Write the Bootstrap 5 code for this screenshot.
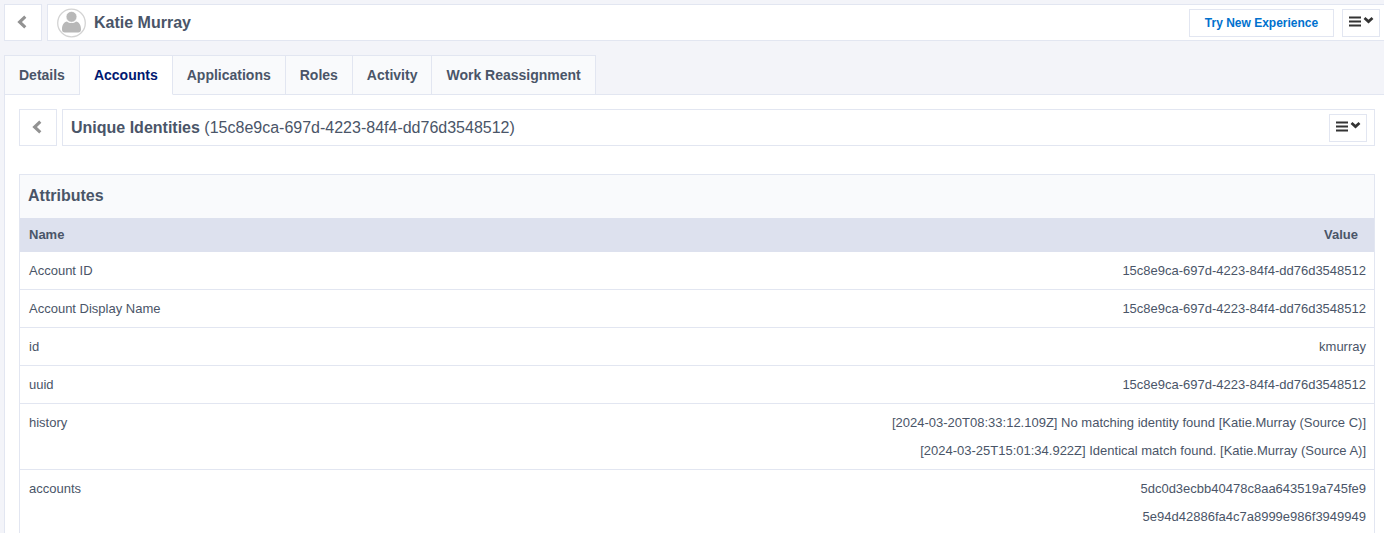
<!DOCTYPE html>
<html lang="en">
<head>
<meta charset="utf-8">
<meta name="viewport" content="width=device-width, initial-scale=1">
<title>Katie Murray - Accounts</title>
<link href="https://cdn.jsdelivr.net/npm/bootstrap@5.3.0/dist/css/bootstrap.min.css" rel="stylesheet">
<style>
  :root { --line: #e2e6f1; --ink: #4a5568; }
  body { font-family: "Liberation Sans", Arial, sans-serif; font-size: 13px; line-height: 20px; color: var(--ink); background: #f3f4f9; overflow: hidden; }
  .page { padding: 4px 0 0 4px; }
  .bar-box { background: #fff; border: 1px solid var(--line); height: 37px; margin-left: 5px; }
  .page-head .bar-box { border-right: 0; padding: 0 4px 0 9px; }
  .panel .bar-box { padding: 0 7px 0 8px; }
  .back-btn, .tool-btn { background: #fff; border: 1px solid var(--line); border-radius: 0; padding: 0; }
  .back-btn { width: 38px; height: 37px; display: flex; align-items: center; justify-content: center; flex: none; }
  .back-btn svg { margin: 0 2px 2px 0; }
  .tool-btn { height: 28px; flex: none; }
  .menu-btn { width: 38px; display: flex; justify-content: center; padding-top: 5px; }
  .try-btn { width: 145px; color: #0071ce; font-size: 12px; font-weight: bold; line-height: 26px; }
  .bar-title { font-size: 16px; line-height: 24px; margin: 0; font-weight: normal; }
  .nav-tabs { --bs-nav-tabs-border-color: var(--line); margin-top: 14px; }
  .nav-tabs .nav-link { border: 1px solid var(--line); border-left-width: 0; border-radius: 0; background: #f9fafc; color: var(--ink); font-size: 14px; font-weight: bold; line-height: 20px; padding: 9px 14px; height: 40px; }
  .nav-tabs .nav-item:first-child .nav-link { border-left-width: 1px; }
  .nav-tabs .nav-link.active { background: #fff; color: #001871; border-color: var(--line) var(--line) #fff; }
  .panel { background: #fff; border-left: 1px solid var(--line); padding: 14px 9px 0 14px; }
  .attributes { border: 1px solid var(--line); margin-top: 28px; }
  .attributes h2 { font-size: 16px; line-height: 24px; font-weight: bold; background: #f9fafc; margin: 0; padding: 9px 8px 10px; }
  .attr-table { --bs-table-color: var(--ink); color: var(--ink); margin: 0; }
  .attr-table > thead > tr > th { background: #dde1ee; border: 0; padding: 7px 16px 7px 9px; }
  .attr-table > tbody > tr > * { border-bottom: 1px solid var(--line); padding: 5px 8px 4px 9px; line-height: 28px; font-weight: normal; }
</style>
</head>
<body>
<svg class="d-none" aria-hidden="true">
  <symbol id="chevron" viewBox="0 0 10 14"><path d="M8.300 1.600 2.600 7l5.700 5.400" fill="none" stroke="#929292" stroke-width="3.100"/></symbol>
  <symbol id="menu" viewBox="0 0 26 13"><path d="M1 2.500h12M1 6.500h12M1 10.500h12" stroke="#333" stroke-width="2"/><path d="m16.500 3 4 3.600 4-3.600" fill="none" stroke="#333" stroke-width="2.700"/></symbol>
</svg>
<div class="page">
  <header class="page-head d-flex">
    <button type="button" class="back-btn" aria-label="Back"><svg width="10" height="14"><use href="#chevron"/></svg></button>
    <div class="bar-box d-flex align-items-center flex-grow-1">
      <svg class="me-2" width="29" height="30" viewBox="0 0 29 30" aria-hidden="true">
        <circle cx="14.5" cy="15" r="13.8" fill="#fff" stroke="#d3d3d3" stroke-width="1.3"/>
        <path d="M5 21.500c0-4.500 2-7.300 5-7.900 2.400 2 6.600 2 9 0 3 .6 5 3.400 5 7.900 0 2-1 3-2.800 3H7.800c-1.800 0-2.800-1-2.800-3z" fill="#b8b8b8"/>
        <circle cx="14.5" cy="8.800" r="5.400" fill="#b8b8b8" stroke="#fff" stroke-width=".6"/>
      </svg>
      <h1 class="bar-title fw-bold me-auto">Katie Murray</h1>
      <button type="button" class="tool-btn try-btn me-2">Try New Experience</button>
      <button type="button" class="tool-btn menu-btn" aria-label="Menu"><svg width="26" height="13"><use href="#menu"/></svg></button>
    </div>
  </header>
  <ul class="nav nav-tabs">
    <li class="nav-item"><a class="nav-link" href="#">Details</a></li>
    <li class="nav-item"><a class="nav-link active" aria-current="page" href="#">Accounts</a></li>
    <li class="nav-item"><a class="nav-link" href="#">Applications</a></li>
    <li class="nav-item"><a class="nav-link" href="#">Roles</a></li>
    <li class="nav-item"><a class="nav-link" href="#">Activity</a></li>
    <li class="nav-item"><a class="nav-link" href="#">Work Reassignment</a></li>
  </ul>
  <main class="panel">
    <div class="d-flex">
      <button type="button" class="back-btn" aria-label="Back to accounts"><svg width="10" height="14"><use href="#chevron"/></svg></button>
      <div class="bar-box d-flex align-items-center flex-grow-1">
        <p class="bar-title me-auto"><strong>Unique Identities</strong> (15c8e9ca-697d-4223-84f4-dd76d3548512)</p>
        <button type="button" class="tool-btn menu-btn" aria-label="Account menu"><svg width="26" height="13"><use href="#menu"/></svg></button>
      </div>
    </div>
    <section class="attributes">
      <h2>Attributes</h2>
      <table class="table attr-table">
        <thead><tr><th scope="col">Name</th><th scope="col" class="text-end">Value</th></tr></thead>
        <tbody>
          <tr><th scope="row">Account ID</th><td class="text-end">15c8e9ca-697d-4223-84f4-dd76d3548512</td></tr>
          <tr><th scope="row">Account Display Name</th><td class="text-end">15c8e9ca-697d-4223-84f4-dd76d3548512</td></tr>
          <tr><th scope="row">id</th><td class="text-end">kmurray</td></tr>
          <tr><th scope="row">uuid</th><td class="text-end">15c8e9ca-697d-4223-84f4-dd76d3548512</td></tr>
          <tr><th scope="row">history</th><td class="text-end"><div>[2024-03-20T08:33:12.109Z] No matching identity found [Katie.Murray (Source C)]</div><div>[2024-03-25T15:01:34.922Z] Identical match found. [Katie.Murray (Source A)]</div></td></tr>
          <tr><th scope="row">accounts</th><td class="text-end"><div>5dc0d3ecbb40478c8aa643519a745fe9</div><div>5e94d42886fa4c7a8999e986f3949949</div></td></tr>
        </tbody>
      </table>
    </section>
  </main>
</div>
<script src="https://cdn.jsdelivr.net/npm/bootstrap@5.3.0/dist/js/bootstrap.bundle.min.js"></script>
</body>
</html>
